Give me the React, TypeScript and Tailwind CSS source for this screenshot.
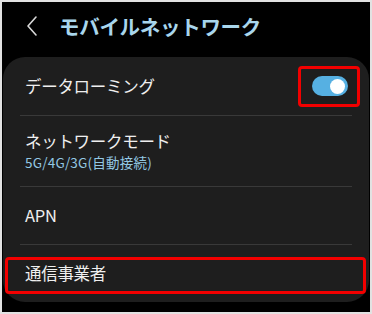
import React from 'react';

const font = { fontFamily: '"Noto Sans CJK JP", "Noto Sans", sans-serif' };

interface Row {
  id: string;
  title: string;
  sub?: string;
  toggle?: boolean;
  h: string;
}

const rows: Row[] = [
  { id: 'roaming', title: 'データローミング', toggle: true, h: 'h-[59px]' },
  { id: 'mode', title: 'ネットワークモード', sub: '5G/4G/3G(自動接続)', h: 'h-[71px]' },
  { id: 'apn', title: 'APN', h: 'h-[58px]' },
  { id: 'carrier', title: '通信事業者', h: 'h-[57px]' },
];

export default function App() {
  return (
    <div
      className="relative w-[372px] h-[314px] border-2 border-[#e2e2e2] bg-black overflow-hidden"
      style={font}
    >
      {/* Header */}
      <div className="flex items-center h-[55px] pl-[23px] pb-[7px]">
        <svg width="14" height="22" viewBox="0 0 14 22" className="shrink-0">
          <path d="M11 2 L3 11 L11 20" fill="none" stroke="#d8d8d8" strokeWidth="1.6" strokeLinecap="round" strokeLinejoin="round" />
        </svg>
        <h1 className="ml-[20px] text-[20.5px] font-bold text-[#a9d6ec] leading-none tracking-[-0.3px]">
          モバイルネットワーク
        </h1>
      </div>

      {/* Card */}
      <div className="mx-px w-[366px] rounded-[22px] bg-[#1e1e1e]">
        {rows.map((row, i) => (
          <div key={row.id} className={`${row.h} flex flex-col`}>
            <div className="flex flex-1 items-center justify-between pl-[22px] pr-[21px]">
              <div className="flex flex-col">
                <span className="text-[16.5px] text-[#efefef] leading-tight tracking-[-0.3px]">{row.title}</span>
                {row.sub && (
                  <span className="mt-[3px] text-[13.5px] text-[#93c8e3] leading-tight tracking-[0.2px]">{row.sub}</span>
                )}
              </div>
              {row.toggle && (
                <div className="flex items-center justify-end w-[36px] h-[20px] rounded-full bg-[#56b0e2] px-[3px]">
                  <div className="w-[15px] h-[15px] rounded-full bg-white" />
                </div>
              )}
            </div>
            {i < rows.length - 1 && <div className="mx-[17px] h-px bg-[#393939]" />}
          </div>
        ))}
      </div>

      {/* Highlight boxes */}
      <div className="absolute left-[296px] top-[64px] w-[62px] h-[41px] rounded-[4px] border-[3px] border-[#f20000]" />
      <div className="absolute left-[3px] top-[255px] w-[361px] h-[37px] rounded-[4px] border-[3px] border-[#f20000]" />
    </div>
  );
}
